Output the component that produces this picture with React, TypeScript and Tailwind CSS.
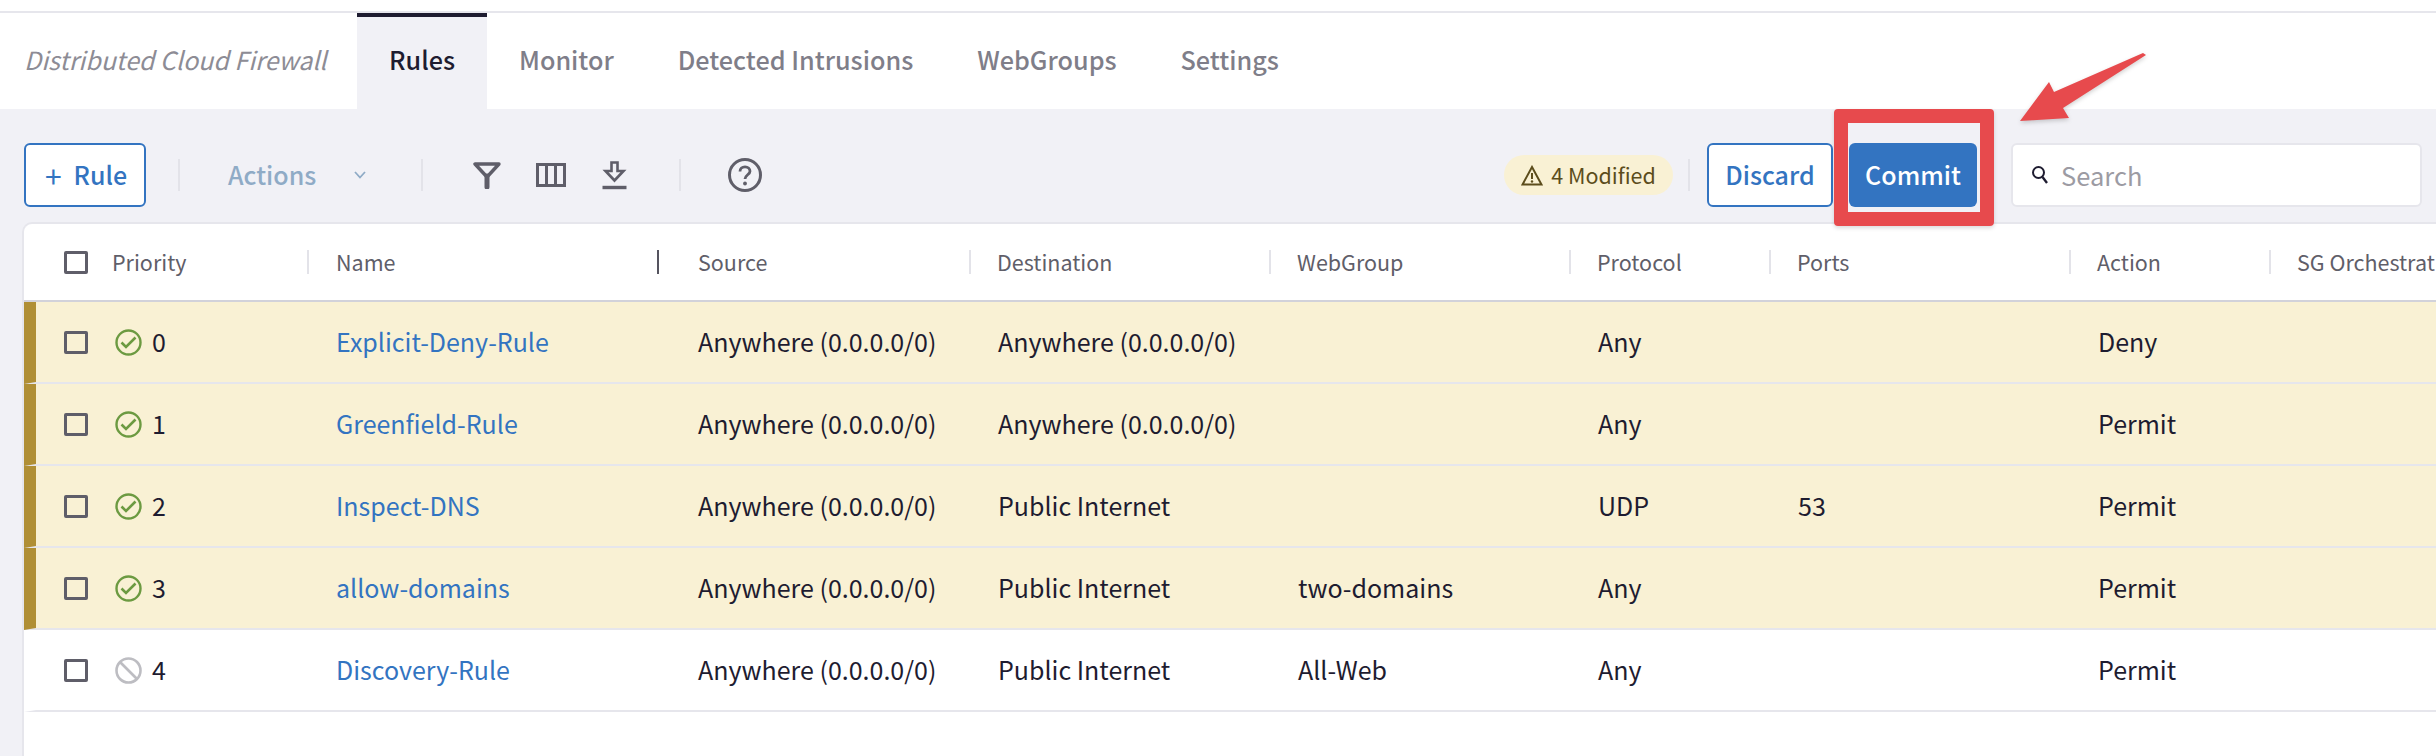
const FONT = '"Noto Sans CJK SC", "Noto Sans", sans-serif';

type Rule = {
  priority: number;
  name: string;
  source: string;
  destination: string;
  webgroup: string;
  protocol: string;
  ports: string;
  action: string;
  modified: boolean;
};

const rules: Rule[] = [
  { priority: 0, name: "Explicit-Deny-Rule", source: "Anywhere (0.0.0.0/0)", destination: "Anywhere (0.0.0.0/0)", webgroup: "", protocol: "Any", ports: "", action: "Deny", modified: true },
  { priority: 1, name: "Greenfield-Rule", source: "Anywhere (0.0.0.0/0)", destination: "Anywhere (0.0.0.0/0)", webgroup: "", protocol: "Any", ports: "", action: "Permit", modified: true },
  { priority: 2, name: "Inspect-DNS", source: "Anywhere (0.0.0.0/0)", destination: "Public Internet", webgroup: "", protocol: "UDP", ports: "53", action: "Permit", modified: true },
  { priority: 3, name: "allow-domains", source: "Anywhere (0.0.0.0/0)", destination: "Public Internet", webgroup: "two-domains", protocol: "Any", ports: "", action: "Permit", modified: true },
  { priority: 4, name: "Discovery-Rule", source: "Anywhere (0.0.0.0/0)", destination: "Public Internet", webgroup: "All-Web", protocol: "Any", ports: "", action: "Permit", modified: false },
];

const tabs = ["Rules", "Monitor", "Detected Intrusions", "WebGroups", "Settings"];

function Checkbox() {
  return <span className="block h-[23px] w-[24px] shrink-0 rounded-[2px] border-[3px] border-[#5f5e69]" />;
}

function StatusIcon({ on }: { on: boolean }) {
  if (on) {
    return (
      <svg width="27" height="27" viewBox="0 0 27 27" fill="none" className="shrink-0">
        <circle cx="13.5" cy="13.5" r="12" stroke="#6c9a41" strokeWidth="2.4" />
        <path d="M6.5 13.5 L11 18 L20.5 8.5" stroke="#6c9a41" strokeWidth="2.6" />
      </svg>
    );
  }
  return (
    <svg width="27" height="27" viewBox="0 0 27 27" fill="none" className="shrink-0">
      <circle cx="13.5" cy="13.5" r="12" stroke="#bdbdc2" strokeWidth="2.6" />
      <path d="M5 5 L22 22" stroke="#bdbdc2" strokeWidth="2.6" />
    </svg>
  );
}

function VDivider() {
  return <span className="block h-[32px] w-[2px] shrink-0 bg-[#e3e3e9]" />;
}

function HeaderCell({ label, className, dark }: { label: string; className: string; dark?: boolean }) {
  return (
    <div className={`flex h-[24px] items-center whitespace-nowrap border-l-2 text-[21.5px] text-[#5f5e69] ${dark ? "border-[#55545f]" : "border-[#e3e3e9]"} ${className}`}>
      {label}
    </div>
  );
}

export default function App() {
  return (
    <div className="relative h-[756px] w-[2436px] overflow-hidden bg-white" style={{ fontFamily: FONT }}>
      <div className="h-[11px] bg-white" />
      <div className="h-[2px] bg-[#e6e6ec]" />

      {/* tabs */}
      <div className="flex h-[96px] items-stretch bg-white pl-[24px]">
        <div className="flex w-[333px] items-center pb-[2px] text-[25px] italic text-[#8d8c95]">Distributed Cloud Firewall</div>
        {tabs.map((t, i) => (
          <div
            key={t}
            className={`flex items-center text-[25.2px] font-medium ${i === 0 ? "border-t-4 border-[#1e1c30] bg-[#f1f1f6] px-[32px] pb-[6px] text-[#1e1c30]" : "px-[32px] pb-[2px] text-[#7f7e89]"}`}
          >
            {t}
          </div>
        ))}
      </div>

      {/* toolbar */}
      <div className="flex h-[113px] items-start bg-[#f1f1f6] pl-[24px] pr-[14px] pt-[34px]">
        <div className="flex h-[64px] w-[122px] items-center justify-center gap-[12px] rounded-[6px] border-2 border-[#3374c1] bg-white pl-[2px] text-[25px] font-medium text-[#3374c1]">
          <span className="text-[30px] font-normal leading-none">+</span>
          Rule
        </div>
        <div className="flex h-[64px] items-center">
          <span className="ml-[32px]"><VDivider /></span>
          <span className="ml-[48px] text-[25px] font-medium text-[#8fabc6]">Actions</span>
          <svg width="12" height="8" viewBox="0 0 12 8" fill="none" className="ml-[38px]">
            <path d="M1 1 L6 6.5 L11 1" stroke="#8fabc6" strokeWidth="1.8" />
          </svg>
          <span className="ml-[55px]"><VDivider /></span>
          <svg width="28" height="27" viewBox="0 0 27 27" fill="none" className="ml-[50px]">
            <path d="M1.5 2 H25.5 L13.5 15 Z" stroke="#5f5e69" strokeWidth="3.4" strokeLinejoin="round" />
            <path d="M13.5 14 V25" stroke="#5f5e69" strokeWidth="5" strokeLinecap="round" />
          </svg>
          <svg width="30" height="24" viewBox="0 0 30 24" fill="none" className="ml-[35px]">
            <rect x="1.5" y="1.5" width="27" height="21" stroke="#5f5e69" strokeWidth="3" />
            <path d="M10.5 2 V22 M19.5 2 V22" stroke="#5f5e69" strokeWidth="3" />
          </svg>
          <svg width="25" height="29" viewBox="0 0 24 29" fill="none" className="ml-[36px]">
            <path d="M9 1.5 H15 V10 H21 L12 19.5 L3 10 H9 Z" stroke="#5f5e69" strokeWidth="2.6" />
            <path d="M0 26.5 H24" stroke="#5f5e69" strokeWidth="3.4" />
          </svg>
          <span className="ml-[52px]"><VDivider /></span>
          <svg width="34" height="34" viewBox="0 0 34 34" fill="none" className="ml-[47px]">
            <circle cx="17" cy="17" r="15.5" stroke="#5f5e69" strokeWidth="3" />
            <path d="M12 13.5 C12 10.5 14.2 8.8 17 8.8 C19.8 8.8 22 10.6 22 13.2 C22 16.6 17 17 17 21" stroke="#5f5e69" strokeWidth="2.8" />
            <circle cx="17" cy="25.5" r="1.9" fill="#5f5e69" />
          </svg>
        </div>

        <div className="ml-auto flex h-[64px] items-center">
          <div className="flex h-[40px] w-[169px] items-center justify-center gap-[8px] rounded-full bg-[#f9f1d4] text-[21.5px] text-[#5c4d1c]">
            <svg width="22" height="21" viewBox="0 0 22 21" fill="none">
              <path d="M11 2 L20.5 19.5 H1.5 Z" stroke="#5c4d1c" strokeWidth="2" />
              <path d="M11 8 V14" stroke="#5c4d1c" strokeWidth="2" />
              <circle cx="11" cy="16.5" r="1.2" fill="#5c4d1c" />
            </svg>
            4 Modified
          </div>
          <span className="ml-[15px] mr-[17px]"><VDivider /></span>
          <div className="flex h-[64px] w-[126px] items-center justify-center rounded-[6px] border-2 border-[#3374c1] bg-white text-[25px] font-medium text-[#3374c1]">Discard</div>
          <div className="ml-[16px] flex h-[64px] w-[128px] items-center justify-center rounded-[6px] bg-[#3374c1] text-[25px] font-medium text-white">Commit</div>
          <div className="ml-[34px] flex h-[64px] w-[411px] items-center gap-[12px] rounded-[6px] border-2 border-[#e6e6ec] bg-white pl-[18px] text-[25.5px] text-[#9c9ba3]">
            <svg width="18" height="20" viewBox="0 0 18 20" fill="none">
              <circle cx="7.5" cy="7.5" r="5.5" stroke="#1e1c30" strokeWidth="2" />
              <path d="M11.5 12 L16 18" stroke="#1e1c30" strokeWidth="2.4" />
            </svg>
            Search
          </div>
        </div>
      </div>

      {/* table */}
      <div className="absolute left-0 right-0 top-[222px] h-[534px] bg-[#f1f1f6] pl-[22px]">
        <div className="h-full rounded-tl-[10px] border-l-2 border-t-2 border-[#e6e6ec] bg-white">
          <div className="flex h-[78px] items-center border-b-2 border-[#d2d2da]">
            <div className="flex w-[283px] shrink-0 items-center">
              <span className="ml-[40px]"><Checkbox /></span>
              <span className="ml-[24px] text-[21.5px] text-[#5f5e69]">Priority</span>
            </div>
            <HeaderCell label="Name" className="w-[350px] shrink-0 pl-[27px]" />
            <HeaderCell label="Source" className="w-[312px] shrink-0 pl-[39px]" dark />
            <HeaderCell label="Destination" className="w-[300px] shrink-0 pl-[26px]" />
            <HeaderCell label="WebGroup" className="w-[300px] shrink-0 pl-[26px]" />
            <HeaderCell label="Protocol" className="w-[200px] shrink-0 pl-[26px]" />
            <HeaderCell label="Ports" className="w-[300px] shrink-0 pl-[26px]" />
            <HeaderCell label="Action" className="w-[200px] shrink-0 pl-[26px]" />
            <HeaderCell label="SG Orchestration" className="w-[170px] shrink-0 overflow-hidden pl-[26px]" />
          </div>
          {rules.map((r) => (
            <div
              key={r.priority}
              className={`flex h-[82px] items-center border-b-2 border-[#e6e6ec] text-[25px] text-[#1e1c30] ${r.modified ? "border-l-[12px] border-l-[#b08f35] bg-[#f9f1d4]" : "border-l-[12px] border-l-white bg-white"}`}
            >
              <div className="flex w-[272px] shrink-0 items-center">
                <span className="ml-[28px]"><Checkbox /></span>
                <span className="ml-[27px]"><StatusIcon on={r.modified} /></span>
                <span className="ml-[10px]">{r.priority}</span>
              </div>
              <div className="w-[390px] shrink-0 pl-[28px] text-[#3374c1]">{r.name}</div>
              <div className="w-[300px] shrink-0">{r.source}</div>
              <div className="w-[300px] shrink-0">{r.destination}</div>
              <div className="w-[300px] shrink-0">{r.webgroup}</div>
              <div className="w-[200px] shrink-0">{r.protocol}</div>
              <div className="w-[300px] shrink-0">{r.ports}</div>
              <div className="w-[200px] shrink-0">{r.action}</div>
            </div>
          ))}
        </div>
      </div>

      {/* annotation: red box and arrow around Commit */}
      <div className="absolute left-[1834px] top-[109px] h-[117px] w-[160px] rounded-[4px] border-[14px] border-[#e74a4d] shadow-[0_2px_4px_rgba(0,0,0,0.15)]" />
      <svg width="140" height="80" viewBox="2015 48 140 80" className="absolute left-[2015px] top-[48px]" style={{ filter: "drop-shadow(0 2px 2px rgba(0,0,0,0.18))" }}>
        <path d="M2020 121 L2049 82 L2054 92 L2143 53 L2146 55 L2063 108 L2069 118 Z" fill="#e74a4d" />
      </svg>
    </div>
  );
}
